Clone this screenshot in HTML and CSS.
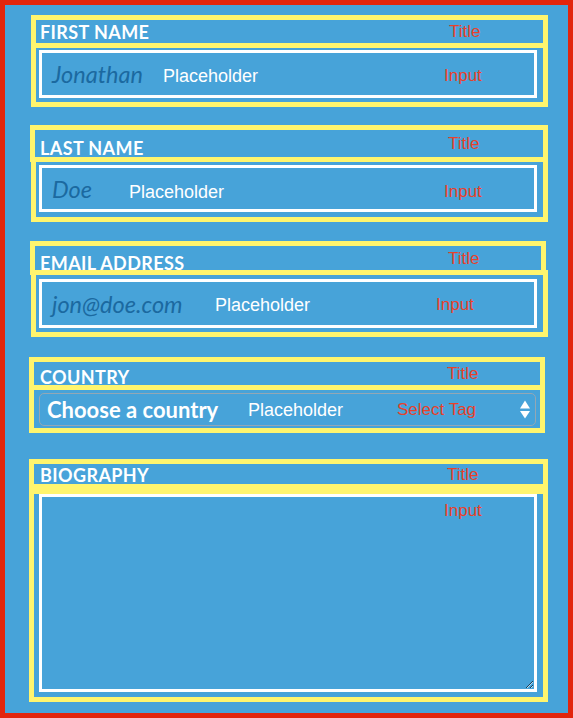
FILE: index.html
```html
<!DOCTYPE html>
<html lang="en">
<head>
<meta charset="utf-8">
<title>Form</title>
<link rel="stylesheet" href="styles.css">
</head>
<body>
<div class="frame">
  <div class="field f1">
    <div class="title t1">First Name<span class="note note-title">Title</span></div>
    <div class="box c1">
      <div class="input i1">
        <span class="value">Jonathan</span>
        <span class="ph ph1">Placeholder</span>
        <span class="note note-in n1">Input</span>
      </div>
    </div>
  </div>

  <div class="field f2">
    <div class="title t2">Last Name<span class="note note-title">Title</span></div>
    <div class="box c2">
      <div class="input i2">
        <span class="value">Doe</span>
        <span class="ph ph2">Placeholder</span>
        <span class="note note-in n2">Input</span>
      </div>
    </div>
  </div>

  <div class="field f3">
    <div class="title t3">Email Address<span class="note note-title">Title</span></div>
    <div class="box c3">
      <div class="input i3">
        <span class="value">jon@doe.com</span>
        <span class="ph ph3">Placeholder</span>
        <span class="note note-in n3">Input</span>
      </div>
    </div>
  </div>

  <div class="field f4">
    <div class="title t4">Country<span class="note note-title">Title</span></div>
    <div class="box c4">
      <div class="select">
        <span class="choice">Choose a country</span>
        <span class="ph ph4">Placeholder</span>
        <span class="note note-in n4">Select Tag</span>
        <svg class="arrows" width="10" height="19" viewBox="0 0 10 19">
          <polygon points="0,8.5 5,0.5 10,8.5" fill="#ffffff"/>
          <polygon points="0,11 10,11 5,18.5" fill="#ffffff"/>
        </svg>
      </div>
    </div>
  </div>

  <div class="field f5">
    <div class="title t5">Biography<span class="note note-title">Title</span></div>
    <div class="box c5">
      <textarea class="bio" aria-label="Biography"></textarea>
      <span class="note note-in n5">Input</span>
    </div>
  </div>
</div>
</body>
</html>
```

FILE: styles.css
```css
html, body {
  margin: 0;
  padding: 0;
}

body {
  width: 573px;
  height: 718px;
  overflow: hidden;
}

.frame {
  box-sizing: border-box;
  width: 573px;
  height: 718px;
  border: 5px solid #e2250d;
  background: #47a3d9;
  padding-top: 10px;
}

.field {
  display: flex;
  flex-direction: column;
}

.f2 { margin-top: 18px; }
.f3 { margin-top: 19px; }
.f4 { margin-top: 20px; }
.f5 { margin-top: 26px; }

.title {
  position: relative;
  box-sizing: border-box;
  border: 5px solid #fff56e;
  font-family: Lato, "Open Sans", sans-serif;
  font-weight: 700;
  font-size: 18px;
  letter-spacing: 0.4px;
  line-height: 21px;
  text-transform: uppercase;
  color: #ffffff;
  white-space: nowrap;
}

.t1 { margin: 0 20px 0 26px; height: 33px; padding: 2px 0 0 4px; }
.t2 { margin: 0 20px 0 25px; height: 37px; padding: 8px 0 0 5px; }
.t3 { margin: 0 22px 0 25px; height: 34px; padding: 7px 0 0 5px; }
.t4 { margin: 0 23px 0 24px; height: 33px; padding: 5px 0 0 6px; }
.t5 { margin: 0 20px 0 24px; height: 30px; padding: 1px 0 0 6px; }

.box {
  position: relative;
  border: 5px solid #fff56e;
}

.c1 { margin: -5px 20px 0 26px; padding: 2px 6px 4px 3px; }
.c2 { margin: -5px 20px 0 26px; padding: 3px 6px 5px 3px; }
.c3 { margin: -5px 20px 0 26px; padding: 4px 6px 4px 3px; }
.c4 { margin: -5px 23px 0 24px; padding: 3px 4px 2px 5px; }
.c5 { margin: 0 20px 0 24px; padding: 0 6px 5px 5px; }

.input {
  position: relative;
  box-sizing: border-box;
  display: flex;
  align-items: center;
  border: 3px solid #ffffff;
  padding-left: 10px;
}

.i1 { height: 48px; }
.i2 { height: 47px; }
.i3 { height: 49px; }

.value {
  font-family: Lato, "Open Sans", sans-serif;
  font-style: italic;
  font-size: 23.5px;
  color: #1b69a0;
  white-space: nowrap;
}

.note, .ph {
  position: absolute;
  top: 0;
  bottom: 0;
  display: flex;
  align-items: center;
  font-family: "Liberation Sans", Arial, sans-serif;
  white-space: nowrap;
  text-transform: none;
  letter-spacing: 0;
  font-weight: 400;
  font-style: normal;
}

.ph {
  font-size: 18px;
  color: #ffffff;
}

.note {
  font-size: 17px;
  color: #e8412a;
}

.note-title { left: 413px; }

.ph1 { left: 121px; padding-top: 4px; }
.ph2 { left: 87px; padding-top: 7px; }
.ph3 { left: 173px; padding-top: 3px; }
.ph4 { left: 208px; padding-top: 1px; }

.n1 { left: 402px; padding-top: 3px; }
.n2 { left: 402px; padding-top: 7px; }
.n3 { left: 394px; padding-top: 3px; }
.n4 { left: 357px; padding-top: 1px; }
.n5 { left: 410px; top: 6px; bottom: auto; height: 22px; }

.select {
  position: relative;
  box-sizing: border-box;
  height: 33px;
  display: flex;
  align-items: center;
  border: 1px solid #93a7b5;
  border-radius: 5px;
  padding-left: 7px;
}

.choice {
  font-family: Lato, "Open Sans", sans-serif;
  font-weight: 700;
  font-size: 22px;
  color: #ffffff;
  white-space: nowrap;
}

.arrows {
  position: absolute;
  right: 5px;
  top: 6px;
}

.bio {
  display: block;
  box-sizing: border-box;
  width: 100%;
  height: 198px;
  margin: 0;
  border: 3px solid #ffffff;
  background: transparent;
  outline: none;
  resize: both;
}
```
